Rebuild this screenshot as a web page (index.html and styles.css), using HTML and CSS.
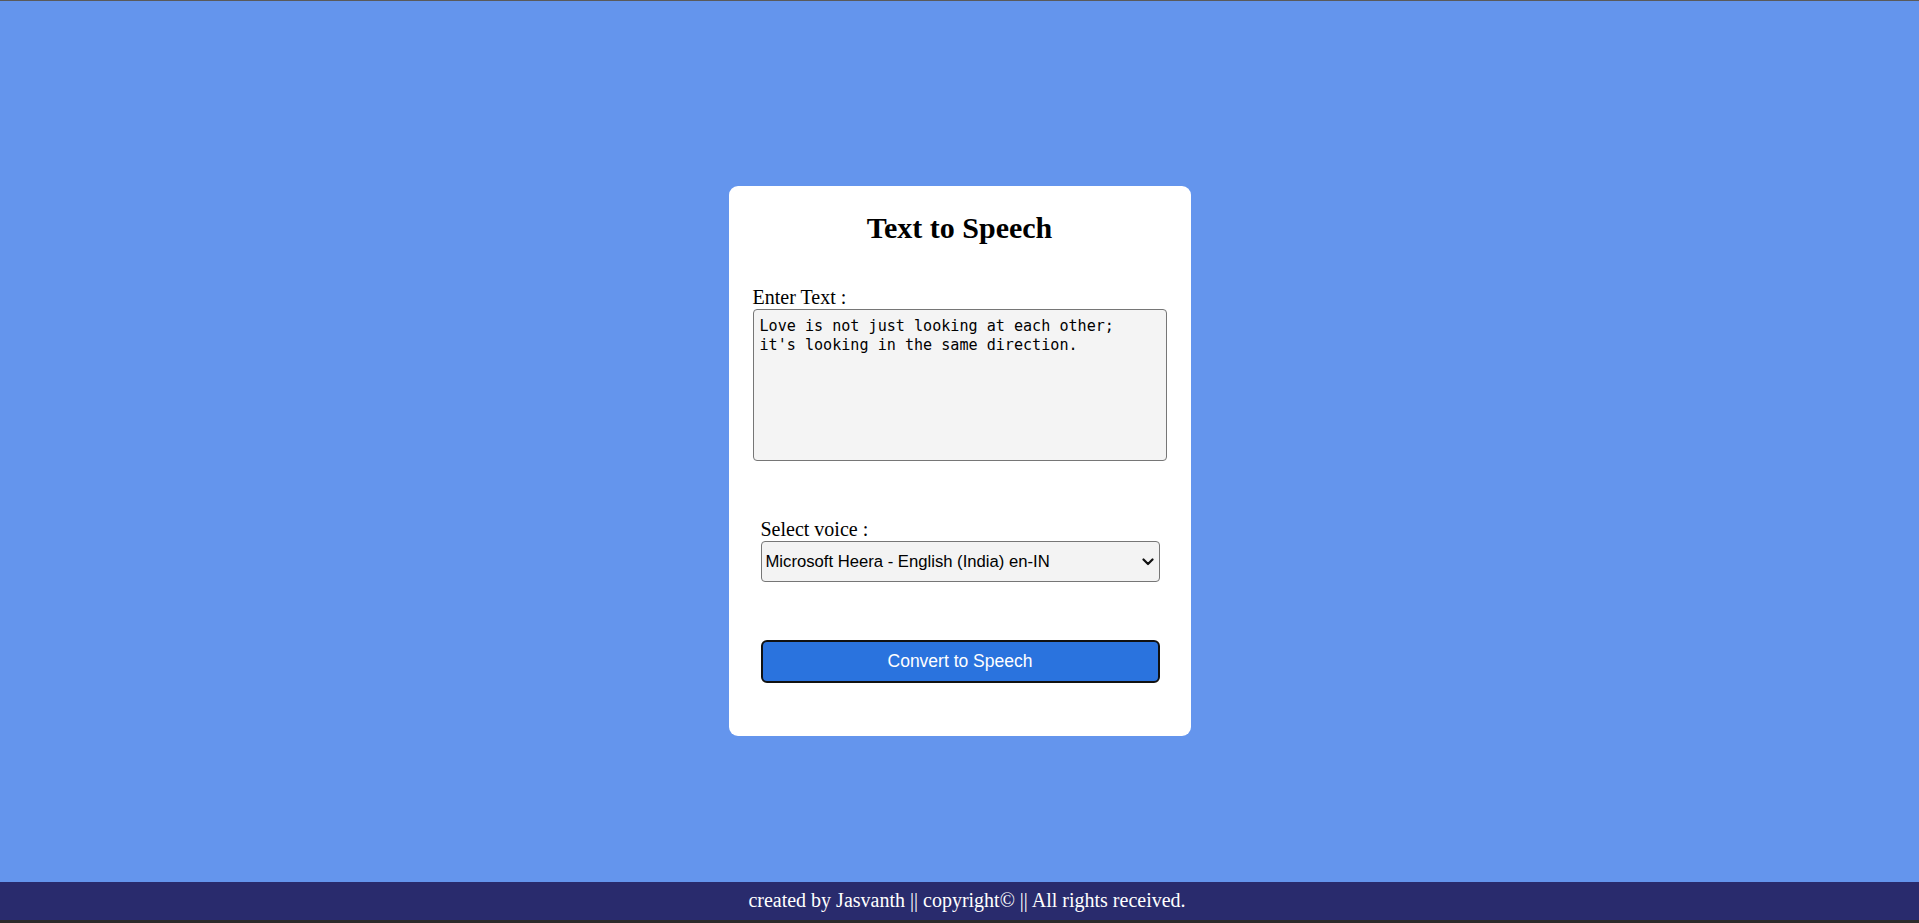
FILE: index.html
```html
<!DOCTYPE html>
<html lang="en">
<head>
<meta charset="utf-8">
<title>Text to Speech</title>
<link rel="stylesheet" href="styles.css">
</head>
<body>
<div class="page">
  <div class="topline"></div>
  <main class="main">
    <section class="card">
      <h2 class="title">Text to Speech</h2>
      <div class="field field-text">
        <label class="label" for="text">Enter Text :</label>
        <textarea id="text" class="textarea">Love is not just looking at each other;
it's looking in the same direction.</textarea>
      </div>
      <div class="field field-voice">
        <label class="label" for="voice">Select voice :</label>
        <div class="select-wrap">
          <select id="voice" class="select">
            <option>Microsoft Heera - English (India) en-IN</option>
          </select>
          <svg class="chevron" width="12" height="8" viewBox="0 0 12 8" aria-hidden="true">
            <path d="M1.5 1.5 L6 6 L10.5 1.5" fill="none" stroke="#111" stroke-width="2.2" stroke-linecap="round" stroke-linejoin="round"/>
          </svg>
        </div>
        <button class="btn" type="button">Convert to Speech</button>
      </div>
    </section>
  </main>
  <footer class="footer">created by Jasvanth || copyright© || All rights received.</footer>
  <div class="bottomline"></div>
</div>
</body>
</html>
```

FILE: styles.css
```css
html, body {
  margin: 0;
  padding: 0;
}

body {
  font-family: "Liberation Serif", "Times New Roman", serif;
  color: #000;
}

.page {
  display: flex;
  flex-direction: column;
  height: 923px;
  overflow: hidden;
}

.topline {
  height: 1px;
  background: #5a5a5a;
  flex: none;
}

.main {
  flex: 1;
  background: #6495ed;
  display: flex;
  justify-content: center;
  align-items: flex-start;
  padding-top: 185px;
  box-sizing: border-box;
}

.card {
  width: 462px;
  box-sizing: border-box;
  background: #fff;
  border-radius: 9px;
  padding: 25px 24px 53px;
}

.title {
  margin: 0;
  font-family: "Liberation Serif", "Times New Roman", serif;
  font-size: 30px;
  font-weight: bold;
  line-height: 34px;
  text-align: center;
}

.label {
  display: block;
  font-size: 20px;
  line-height: 23px;
}

.field-text {
  margin-top: 41px;
}

.textarea {
  display: block;
  width: 414px;
  height: 152px;
  box-sizing: border-box;
  margin: 0;
  padding: 7px 6px;
  border: 1px solid #767676;
  border-radius: 4px;
  background: #f4f4f4;
  font-family: "DejaVu Sans Mono", "Liberation Mono", monospace;
  font-size: 15.1px;
  line-height: 19px;
  color: #000;
  resize: none;
}

.field-voice {
  margin-top: 57px;
  padding: 0 7px 0 8px;
}

.select-wrap {
  position: relative;
  height: 41px;
}

.select {
  appearance: none;
  -webkit-appearance: none;
  display: block;
  width: 100%;
  height: 41px;
  box-sizing: border-box;
  margin: 0;
  padding: 0 30px 0 4px;
  border: 1px solid #767676;
  border-radius: 4px;
  background: #f3f3f3;
  font-family: "Liberation Sans", Arial, sans-serif;
  font-size: 16.67px;
  color: #000;
}

.chevron {
  position: absolute;
  right: 6px;
  top: 17px;
  pointer-events: none;
}

.btn {
  display: block;
  width: 100%;
  height: 43px;
  box-sizing: border-box;
  margin-top: 58px;
  padding: 0;
  border: 2px solid #111;
  border-radius: 6px;
  background: #2a73de;
  color: #fff;
  font-family: "Liberation Sans", Arial, sans-serif;
  font-size: 17.5px;
  cursor: pointer;
}

.footer {
  flex: none;
  height: 38px;
  box-sizing: border-box;
  padding: 7px 0 0 15px;
  background: #292b6d;
  color: #fff;
  text-align: center;
  font-size: 20px;
  line-height: 23px;
}

.bottomline {
  flex: none;
  height: 3px;
  background: #2b2b2b;
}
```
